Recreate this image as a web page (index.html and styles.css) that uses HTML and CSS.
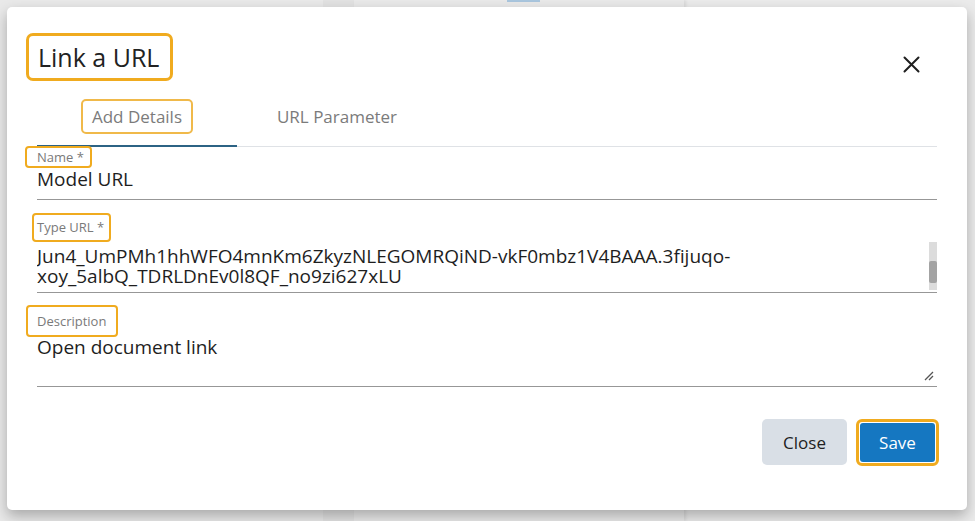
FILE: index.html
```html
<!DOCTYPE html>
<html>
<head>
<meta charset="utf-8">
<link rel="stylesheet" href="styles.css">
</head>
<body>
<div class="backdrop">
  <div class="bg-panel p1"></div>
  <div class="bg-gap"></div>
  <div class="bg-panel p2"><span class="bg-blue"></span></div>
  <div class="bg-panel p3"></div>
</div>
<div class="modal">
  <div class="modal-header">
    <h1 class="title">Link a URL</h1>
    <svg class="close-x" width="17" height="17" viewBox="0 0 17 17"><path d="M1.5 1.5 L15.5 15.5 M15.5 1.5 L1.5 15.5" stroke="#1f1f1f" stroke-width="2" stroke-linecap="round"/></svg>
  </div>
  <div class="tabs">
    <div class="tab active"><span class="tab-label hl">Add Details</span></div>
    <div class="tab"><span class="tab-label">URL Parameter</span></div>
  </div>
  <div class="field f-name">
    <span class="tag tag-name">Name *</span>
    <div class="value">Model URL</div>
  </div>
  <div class="field f-url">
    <span class="tag tag-url">Type URL *</span>
    <div class="ta">
      <div class="ta-text">
        <div class="ta-scroll"><div class="ta-line">Jun4_UmPMh1hhWFO4mnKm6ZkyzNLEGOMRQiND-vkF0mbz1V4BAAA.3fijuqo-</div><div class="ta-line">xoy_5albQ_TDRLDnEv0l8QF_no9zi627xLU</div></div>
      </div>
      <div class="scrollbar"><div class="thumb"></div><div class="sb-arrow"></div></div>
    </div>
  </div>
  <div class="field f-desc">
    <span class="tag tag-desc">Description</span>
    <div class="ta2">
      <div class="value2">Open document link</div>
      <svg class="grip" width="10" height="10" viewBox="0 0 10 10"><path d="M1 9 L9 1 M5 9 L9 5" stroke="#555" stroke-width="1.3"/></svg>
    </div>
  </div>
  <div class="actions">
    <button class="btn btn-close">Close</button>
    <span class="save-hl"><button class="btn btn-save">Save</button></span>
  </div>
</div>
</body>
</html>
```
FILE: styles.css
```css
* { box-sizing: border-box; }
html, body { margin: 0; padding: 0; }
body {
  width: 975px;
  height: 521px;
  overflow: hidden;
  background: #dcdcdc;
  font-family: "Open Sans", "Liberation Sans", sans-serif;
  position: relative;
}
.backdrop {
  display: flex;
  height: 521px;
  background: #d9d9d9;
}
.bg-panel { background: #e9e9e9; height: 100%; }
.p1 { width: 323px; }
.bg-gap { width: 31px; background: #e2e2e2; }
.p2 { width: 330px; position: relative; box-shadow: 2px 0 3px rgba(0,0,0,0.08); }
.p3 { flex: 1; background: #ebebeb; }
.bg-blue { position: absolute; left: 153px; top: 0; width: 33px; height: 2px; background: #a9c6de; }

.modal {
  position: absolute;
  left: 7px;
  top: 7px;
  width: 960px;
  height: 503px;
  background: #fff;
  border-radius: 5px;
  box-shadow: 0 6px 14px rgba(0,0,0,0.28);
  padding: 26px 30px 0 30px;
}
.modal-header {
  display: flex;
  justify-content: space-between;
  align-items: flex-start;
}
.title {
  margin: 0 0 0 -11px;
  font-size: 25px;
  font-weight: 400;
  line-height: 32px;
  color: #222;
  border: 3px solid #f0ab1f;
  border-radius: 7px;
  padding: 5px 11px 5px 9px;
}
.close-x { margin-top: 23px; margin-right: 17px; }

.tabs {
  display: flex;
  margin-top: 18px;
  border-bottom: 1px solid #dfe2e6;
}
.tab {
  width: 200px;
  display: flex;
  justify-content: center;
  padding-bottom: 11px;
  border-bottom: 2px solid transparent;
  margin-bottom: -1px;
}
.tab.active { border-bottom-color: #2c6384; }
.tab-label {
  font-size: 17px;
  line-height: 22px;
  color: #7b7b7b;
  padding: 4.5px 9px;
  border: 2px solid transparent;
  border-radius: 5px;
}
.tab-label.hl { border-color: #f0b94a; }

.field { border-bottom: 1px solid #979797; }
.f-name { margin-top: -2px; padding-bottom: 9px; }
.tag {
  display: inline-block;
  font-size: 13px;
  line-height: 18px;
  color: #7a7a7a;
  border: 2px solid #f0ab1f;
  border-radius: 4px;
}
.tag-name { margin-left: -12px; padding: 0 6px 0 10px; }
.tag-url { margin-left: -5px; padding: 3px 5px 4px 3px; }
.tag-desc { margin-left: -11px; padding: 5px 10px 5px 9px; }
.value {
  margin-top: 0;
  font-size: 19px;
  line-height: 22px;
  color: #1e1e1e;
}
.f-url { margin-top: 13px; }
.ta { display: flex; height: 50px; }
.ta-text { flex: 1; overflow: hidden; }
.ta-scroll {
  padding-top: 4px;
  font-size: 19px;
  color: #1e1e1e;
  white-space: nowrap;
}
.ta-line { height: 20px; line-height: 20px; }
.scrollbar {
  width: 8px;
  height: 48px;
  background: #dcdcdc;
  display: flex;
  flex-direction: column;
  padding-top: 19px;
}
.thumb { height: 22px; background: #a3a3a3; border-radius: 2px; }
.sb-arrow { height: 7px; }

.f-desc { margin-top: 12px; }
.ta2 {
  height: 49px;
  display: flex;
  justify-content: space-between;
  align-items: flex-end;
}
.value2 {
  align-self: flex-start;
  font-size: 19px;
  line-height: 20px;
  color: #1e1e1e;
}
.grip { margin: 0 3px 5px 0; }

.actions {
  display: flex;
  justify-content: flex-end;
  align-items: flex-start;
  margin-top: 32px;
  margin-right: -2px;
  gap: 9px;
}
.btn {
  font-family: inherit;
  font-size: 17px;
  border: none;
  border-radius: 5px;
  cursor: pointer;
}
.btn-close {
  width: 85px;
  height: 46px;
  background: #d9dfe6;
  color: #222;
}
.save-hl {
  display: block;
  border: 3px solid #f0ab1f;
  border-radius: 6px;
  padding: 1px;
}
.btn-save {
  display: block;
  width: 75px;
  height: 39px;
  background: #1577c1;
  color: #fff;
  border-radius: 3px;
}
```
